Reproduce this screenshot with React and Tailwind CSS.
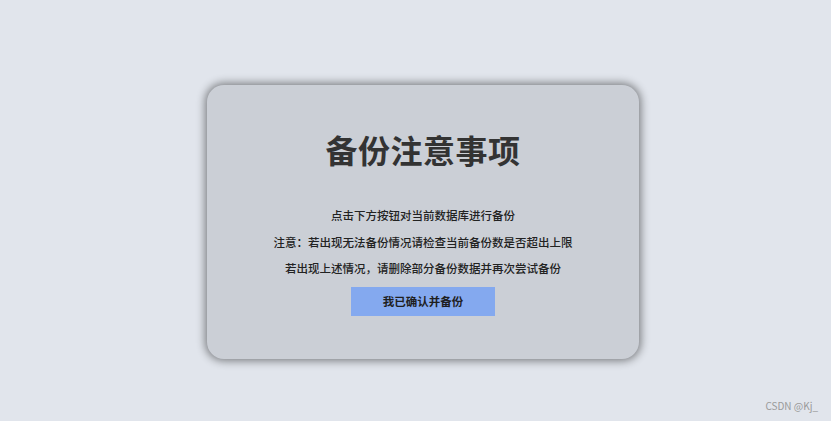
import React from 'react';

const font = { fontFamily: '"Noto Sans CJK SC", "Liberation Sans", sans-serif' };

function App() {
  return (
    <div
      className="relative w-[831px] h-[421px] bg-[#e1e5ec] flex justify-center pt-[85px] pl-[15px]"
      style={font}
    >
      {/* Notice card */}
      <div className="w-[432px] h-[274px] bg-[#cbcfd6] rounded-[17px] shadow-[0_0_8px_2px_rgba(0,0,0,0.45)] flex flex-col items-center">
        <h1 className="mt-[44px] text-[32px] leading-[40px] font-bold text-[#333333] tracking-[0.5px]">
          备份注意事项
        </h1>
        <div className="mt-[37px] flex flex-col items-center gap-[8.5px] text-[11.5px] leading-[18px] font-medium text-[#222222]">
          <p>点击下方按钮对当前数据库进行备份</p>
          <p>注意：若出现无法备份情况请检查当前备份数是否超出上限</p>
          <p>若出现上述情况，请删除部分备份数据并再次尝试备份</p>
        </div>
        <button className="mt-[10px] w-[144px] h-[29px] bg-[#84a9ef] text-[11.5px] font-bold text-[#1f1f1f]">
          我已确认并备份
        </button>
      </div>

      {/* Watermark */}
      <span className="absolute right-[13px] bottom-[8px] text-[10px] text-[#9a9a9a]">
        CSDN @Kj_
      </span>
    </div>
  );
}

export default App;
